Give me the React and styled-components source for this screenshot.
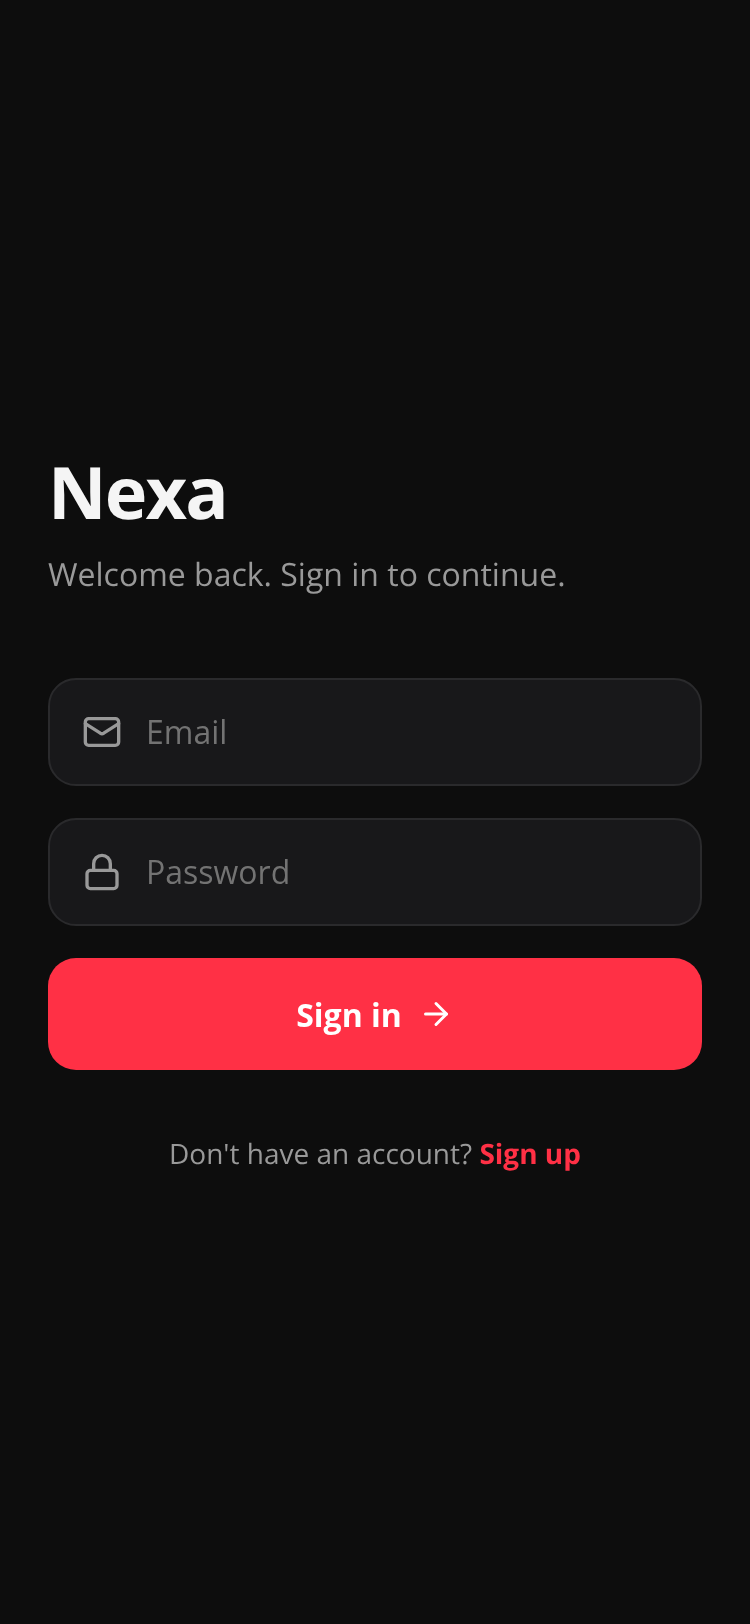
import React from 'react';
import styled, { createGlobalStyle } from 'styled-components';
import { Mail, Lock, ArrowRight } from 'lucide-react';

const GlobalStyle = createGlobalStyle`
  * {
    box-sizing: border-box;
  }
  html, body {
    margin: 0;
    background: #0d0d0d;
  }
`;

const Screen = styled.div`
  min-height: 1624px;
  display: flex;
  flex-direction: column;
  justify-content: center;
  padding: 0 48px 2px;
  font-family: 'Open Sans', sans-serif;
  text-rendering: geometricPrecision;
  will-change: transform;
`;

const Title = styled.h1`
  margin: 0 0 17px;
  font-size: 72px;
  line-height: 88px;
  font-weight: 700;
  letter-spacing: -1.8px;
  color: #f5f5f5;
`;

const Subtitle = styled.p`
  margin: 0 0 81px;
  font-size: 32px;
  line-height: 44px;
  color: #999999;
`;

const Form = styled.form`
  display: flex;
  flex-direction: column;
  gap: 32px;
`;

const Field = styled.label`
  height: 108px;
  display: flex;
  align-items: center;
  gap: 24px;
  padding: 0 32px;
  background: #18181a;
  border: 2px solid #2a2a2c;
  border-radius: 28px;
  color: #999999;
`;

const Input = styled.input`
  flex: 1;
  min-width: 0;
  padding: 0 0 1px;
  border: none;
  outline: none;
  background: transparent;
  color: #f5f5f5;
  font-family: inherit;
  font-size: 32px;
  &::placeholder {
    color: #737373;
    opacity: 1;
  }
`;

const SubmitButton = styled.button`
  height: 112px;
  display: flex;
  align-items: center;
  justify-content: center;
  gap: 16px;
  border: none;
  border-radius: 28px;
  background: #ff3045;
  color: #fff;
  font-family: inherit;
  font-size: 32px;
  font-weight: 700;
  cursor: pointer;
`;

const Footer = styled.p`
  margin: 64px 0 0;
  text-align: center;
  font-size: 28px;
  line-height: 40px;
  color: #999999;
`;

const SignUpLink = styled.a`
  color: #ff3045;
  font-weight: 700;
  text-decoration: none;
`;

export default function App() {
  return (
    <>
      <GlobalStyle />
      <Screen>
        <Title>Nexa</Title>
        <Subtitle>Welcome back. Sign in to continue.</Subtitle>
        <Form onSubmit={(e) => e.preventDefault()}>
          <Field>
            <Mail size={40} strokeWidth={2} />
            <Input type="email" placeholder="Email" />
          </Field>
          <Field>
            <Lock size={40} strokeWidth={2} />
            <Input type="password" placeholder="Password" />
          </Field>
          <SubmitButton type="submit">
            Sign in
            <ArrowRight size={36} strokeWidth={2} />
          </SubmitButton>
        </Form>
        <Footer>
          Don't have an account? <SignUpLink href="#">Sign up</SignUpLink>
        </Footer>
      </Screen>
    </>
  );
}
